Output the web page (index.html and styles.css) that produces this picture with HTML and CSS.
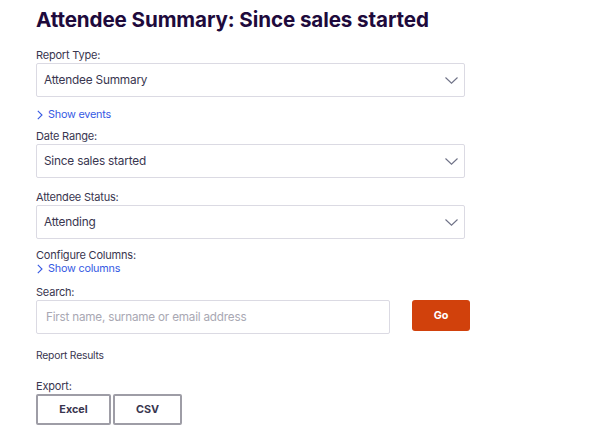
FILE: index.html
```html
<!DOCTYPE html>
<html>
<head>
<meta charset="utf-8">
<link rel="stylesheet" href="styles.css">
</head>
<body>
<main class="page">
  <h1 class="title">Attendee Summary: Since sales started</h1>

  <div class="label">Report Type:</div>
  <div class="select"><span>Attendee Summary</span>
    <svg class="chev" width="13" height="7" viewBox="0 0 13 7"><path d="M0.5 0.5 L6.5 6.2 L12.5 0.5" fill="none" stroke="#6f7287" stroke-width="1.1"/></svg>
  </div>
  <a class="link link-events"><svg class="lchev" width="6" height="10" viewBox="0 0 6 10"><path d="M0.8 0.8 L5 5 L0.8 9.2" fill="none" stroke="#3659e3" stroke-width="1.1"/></svg>Show events</a>

  <div class="label label-date">Date Range:</div>
  <div class="select"><span>Since sales started</span>
    <svg class="chev" width="13" height="7" viewBox="0 0 13 7"><path d="M0.5 0.5 L6.5 6.2 L12.5 0.5" fill="none" stroke="#6f7287" stroke-width="1.1"/></svg>
  </div>

  <div class="label label-status">Attendee Status:</div>
  <div class="select"><span>Attending</span>
    <svg class="chev" width="13" height="7" viewBox="0 0 13 7"><path d="M0.5 0.5 L6.5 6.2 L12.5 0.5" fill="none" stroke="#6f7287" stroke-width="1.1"/></svg>
  </div>

  <div class="label label-config">Configure Columns:</div>
  <a class="link link-columns"><svg class="lchev" width="6" height="10" viewBox="0 0 6 10"><path d="M0.8 0.8 L5 5 L0.8 9.2" fill="none" stroke="#3659e3" stroke-width="1.1"/></svg>Show columns</a>

  <div class="label label-search">Search:</div>
  <div class="search-row">
    <div class="input">First name, surname or email address</div>
    <button class="go">Go</button>
  </div>

  <div class="results">Report Results</div>

  <div class="label label-export">Export:</div>
  <div class="export-row">
    <button class="exp exp-excel">Excel</button>
    <button class="exp exp-csv">CSV</button>
  </div>
</main>
</body>
</html>
```

FILE: styles.css
```css
html, body {
  margin: 0;
  padding: 0;
  background: #ffffff;
}
body {
  font-family: Inter, "Noto Sans", "Liberation Sans", sans-serif;
  color: #39364f;
  font-size: 11px;
  letter-spacing: -0.2px;
}
.page {
  padding: 8px 36px 0 36px;
  display: flex;
  flex-direction: column;
  align-items: flex-start;
}
.title {
  margin: 0 0 15px 0;
  font-size: 20.6px;
  line-height: 24px;
  font-weight: 700;
  color: #1e0a3c;
  letter-spacing: -0.1px;
}
.label {
  line-height: 16px;
  height: 16px;
}
.select {
  box-sizing: border-box;
  width: 429px;
  height: 34px;
  border: 1px solid #dbdae3;
  border-radius: 2px;
  display: flex;
  align-items: center;
  justify-content: space-between;
  padding: 0 6px 0 7px;
  font-size: 11.8px;
}
.chev {
  margin-top: 1px;
}
.link {
  color: #3659e3;
  display: flex;
  align-items: center;
  gap: 5px;
  line-height: 16px;
  height: 16px;
  font-size: 10.8px;
}
.lchev {
  margin-left: 1px;
}
.link-events {
  margin-top: 10px;
}
.label-date {
  margin-top: 5px;
}
.label-status {
  margin-top: 11px;
}
.label-config {
  margin-top: 9px;
  height: 14px;
  line-height: 14px;
}
.link-columns {
  height: 14px;
  line-height: 14px;
}
.label-search {
  margin-top: 8px;
}
.search-row {
  display: flex;
  align-items: flex-start;
  gap: 22px;
}
.input {
  box-sizing: border-box;
  width: 354px;
  height: 34px;
  border: 1px solid #dbdae3;
  border-radius: 2px;
  display: flex;
  align-items: center;
  padding: 0 9px;
  color: #a9a8b3;
  font-size: 11.7px;
}
.go {
  box-sizing: border-box;
  width: 58px;
  height: 31px;
  background: #d1410c;
  border: none;
  border-radius: 3px;
  color: #ffffff;
  font-family: inherit;
  font-size: 10.8px;
  font-weight: 700;
  letter-spacing: 0;
  padding: 0;
}
.results {
  margin-top: 13px;
  line-height: 16px;
  font-size: 10.3px;
}
.label-export {
  margin-top: 15px;
}
.export-row {
  display: flex;
  gap: 2px;
}
.exp {
  box-sizing: border-box;
  height: 31px;
  background: #ffffff;
  border: 2px solid #9e9da6;
  border-radius: 2px;
  color: #39364f;
  font-family: inherit;
  font-size: 10.8px;
  font-weight: 700;
  letter-spacing: 0;
  padding: 0;
}
.exp-excel {
  width: 75px;
}
.exp-csv {
  width: 69px;
}
```
